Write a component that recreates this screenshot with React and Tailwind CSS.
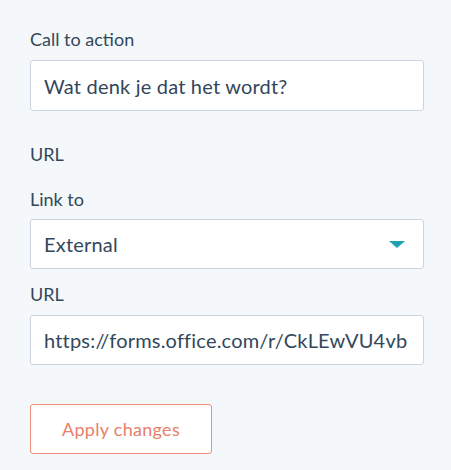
import { useState } from 'react';

const Label = ({ children, className = '' }) => (
  <label className={`block text-[18px] leading-6 text-[#33475b] ${className}`}>{children}</label>
);

export default function App() {
  const [cta, setCta] = useState('Wat denk je dat het wordt?');
  const [url, setUrl] = useState('https://forms.office.com/r/CkLEwVU4vb');

  return (
    <div
      className="min-h-screen w-[451px] h-[470px] bg-[#f5f8fa] pl-[30px] pr-[27px] pt-[27px]"
      style={{ fontFamily: 'Lato, "Open Sans", sans-serif' }}
    >
      {/* Call to action */}
      <Label>Call to action</Label>
      <input
        value={cta}
        onChange={(e) => setCta(e.target.value)}
        className="mt-[9px] block w-full h-[51px] rounded-[3px] border border-[#cbd6e2] bg-white px-[13px] text-[20px] tracking-[0.2px] text-[#33475b] outline-none"
      />

      <Label className="mt-[31px]">URL</Label>

      {/* Link to */}
      <Label className="mt-[21px]">Link to</Label>
      <div className="mt-[8px] flex h-[50px] w-full items-center justify-between rounded-[3px] border border-[#cbd6e2] bg-white pl-[13px] pr-[18px]">
        <span className="text-[20px] tracking-[0.2px] text-[#33475b]">External</span>
        <svg width="16" height="7" viewBox="0 0 16 7">
          <path d="M0 0 L16 0 L8 7 Z" fill="#1ba3b5" />
        </svg>
      </div>

      <Label className="mt-[13px]">URL</Label>
      <input
        value={url}
        onChange={(e) => setUrl(e.target.value)}
        className="mt-[9px] block w-full h-[50px] rounded-[3px] border border-[#cbd6e2] bg-white px-[13px] text-[20px] tracking-[0.2px] text-[#33475b] outline-none"
      />

      <button className="mt-[39px] block h-[50px] w-[182px] rounded-[3px] border border-[#ec8f78] bg-white text-[18px] tracking-[0.3px] text-[#e8806a]">
        Apply changes
      </button>
    </div>
  );
}
